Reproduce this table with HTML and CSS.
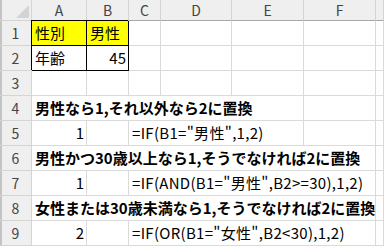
FILE: index.html
```html
<!DOCTYPE html>
<html lang="ja">
<head>
    <meta charset="UTF-8">
    <title>IF関数の置換</title>
    <link rel="stylesheet" href="styles.css">
</head>
<body>
    <div class="sheet">
        <!-- column headers -->
        <div class="corner"><span class="corner-mark"></span></div>
        <div class="col-head">A</div>
        <div class="col-head">B</div>
        <div class="col-head">C</div>
        <div class="col-head">D</div>
        <div class="col-head">E</div>
        <div class="col-head">F</div>
        <div class="col-head"></div>

        <!-- 1 -->
        <div class="row-head">1</div>
        <div class="boxed fill">性別</div>
        <div class="boxed fill">男性</div>
        <div></div><div></div><div></div><div></div><div></div>

        <!-- 2 -->
        <div class="row-head">2</div>
        <div class="boxed">年齢</div>
        <div class="boxed num">45</div>
        <div></div><div></div><div></div><div></div><div></div>

        <!-- 3 -->
        <div class="row-head">3</div>
        <div></div><div></div><div></div><div></div><div></div><div></div><div></div>

        <!-- 4 -->
        <div class="row-head">4</div>
        <div class="title span-5">男性なら1,それ以外なら2に置換</div>
        <div></div><div></div>

        <!-- 5 -->
        <div class="row-head">5</div>
        <div class="num">1</div>
        <div></div>
        <div class="formula span-3">=IF(B1="男性",1,2)</div>
        <div></div><div></div>

        <!-- 6 -->
        <div class="row-head">6</div>
        <div class="title span-6">男性かつ30歳以上なら1,そうでなければ2に置換</div>
        <div></div>

        <!-- 7 -->
        <div class="row-head">7</div>
        <div class="num">1</div>
        <div></div>
        <div class="formula span-4">=IF(AND(B1="男性",B2&gt;=30),1,2)</div>
        <div></div>

        <!-- 8 -->
        <div class="row-head">8</div>
        <div class="title span-6">女性または30歳未満なら1,そうでなければ2に置換</div>
        <div></div>

        <!-- 9 -->
        <div class="row-head">9</div>
        <div class="num">2</div>
        <div></div>
        <div class="formula span-4">=IF(OR(B1="女性",B2&lt;30),1,2)</div>
        <div></div>
    </div>
</body>
</html>
```

FILE: styles.css
```css
body {
    margin: 0;
    background: #fff;
    font-family: "Noto Sans CJK JP", "Noto Sans", sans-serif;
}

.sheet {
    display: grid;
    grid-template-columns: 32px 55px 42px 32px 71px 72px 72px 1fr;
    grid-template-rows: 21px repeat(9, 25px);
    height: 246px;
    overflow: hidden;
    font-size: 15px;
    color: #000;
}

.sheet > div {
    box-sizing: border-box;
    display: flex;
    align-items: flex-end;
    padding: 0 3px 1px;
    border-right: 1px solid #dadada;
    border-bottom: 1px solid #dadada;
    white-space: nowrap;
    line-height: 22px;
}

/* headers */
.sheet > .corner,
.sheet > .col-head,
.sheet > .row-head {
    background: #efefef;
    color: #444;
    font-size: 14px;
    justify-content: center;
    align-items: center;
    padding: 0;
}

.sheet > .corner,
.sheet > .col-head {
    border-bottom-color: #a8a8a8;
}

.sheet > .col-head {
    border-right-color: #d4d4d4;
}

.sheet > .corner,
.sheet > .row-head {
    box-shadow: inset 2px 0 0 #c4c4c4;
    border-right-color: #d4d4d4;
    border-bottom-color: #d4d4d4;
}

.sheet > .corner {
    justify-content: flex-end;
    align-items: flex-end;
    padding: 0 2px 2px 0;
}

.corner-mark {
    width: 0;
    height: 0;
    border-left: 13px solid transparent;
    border-bottom: 13px solid #d3d3d3;
}

/* cells */
.sheet > .boxed {
    border-right-color: #000;
    border-bottom-color: #000;
    box-shadow: -1px -1px 0 #000;
}

.fill {
    background: #ffff00;
}

.sheet > .num {
    justify-content: flex-end;
    padding-right: 2px;
}

.title {
    font-weight: bold;
}

.formula {
    letter-spacing: 0.3px;
}

.span-3 { grid-column: span 3; }
.span-4 { grid-column: span 4; }
.span-5 { grid-column: span 5; }
.span-6 { grid-column: span 6; }
```
